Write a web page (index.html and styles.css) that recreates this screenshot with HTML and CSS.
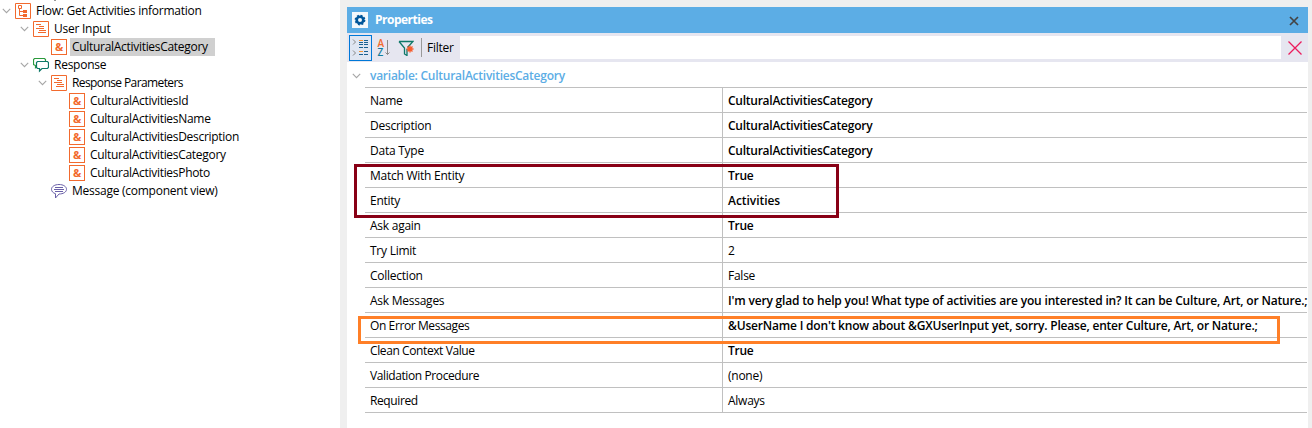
FILE: index.html
```
<!DOCTYPE html>
<html lang="en">
<head>
<meta charset="utf-8">
<title>Properties</title>
<link rel="stylesheet" href="styles.css">
</head>
<body>
<svg class="defs" width="0" height="0">
  <symbol id="chev" viewBox="0 0 9 6"><path d="M.8 .8 4.5 4.6 8.2 .8" fill="none" stroke="#a6a6a6" stroke-width="1.1"/></symbol>
  <symbol id="amp" viewBox="0 0 16 16"><rect x=".5" y=".5" width="15" height="15" fill="#fff" stroke="#f26a2e"/><text class="amp" x="8" y="12" text-anchor="middle">&amp;</text></symbol>
  <symbol id="list" viewBox="0 0 16 16"><path d="M.5.5h15v15H.5z" fill="#fff" stroke="#f26a2e"/><path d="M3 3.500h5M6 5.500h5M3 7.500h8M6 9.500h7M5 11.500h8" fill="none" stroke="#f26a2e"/></symbol>
  <symbol id="flow" viewBox="0 0 16 16"><path d="M.5.5h15v15H.5zM3.500 2.500h3v3h-3zM4.500 6v6.500h4M4.500 8.500h4" fill="none" stroke="#f26a2e"/><path d="M8 7h4v3H8zM8 11h4v3H8z" fill="#f26a2e"/></symbol>
  <symbol id="chat" viewBox="0 0 16 16"><path d="M3.500 9.500 2.500 10.500v-2L.5 7.500v-5l1-1h10l1 1v2" fill="none" stroke="#2a9a3c" stroke-width="1.200"/><path d="M4.500 4.500h10l1 1v5l-1 1H9L6.500 14v-2.500h-2l-1-1v-5z" fill="#fff" stroke="#0e7868" stroke-width="1.200"/></symbol>
  <symbol id="bubble" viewBox="0 0 16 16"><path d="M8 1.500c4.200 0 7.500 2 7.500 4.800S12.200 11 8 11L4.500 15v-4.300C2 10 .5 8.300 .5 6.300.5 3.500 3.800 1.500 8 1.500z" fill="#fff" stroke="#6a60a8"/><path d="M4 4.500h8M3 6.500h10M4 8.500h8" stroke="#6a60a8"/></symbol>
</svg>
<div class="app">
  <div class="tree">
    <div class="node l0"><svg class="chev"><use href="#chev"/></svg><svg class="icon"><use href="#flow"/></svg><span class="t">Flow: Get Activities information</span></div>
    <div class="node l1"><svg class="chev"><use href="#chev"/></svg><svg class="icon"><use href="#list"/></svg><span class="t">User Input</span></div>
    <div class="node l2 leaf"><svg class="icon"><use href="#amp"/></svg><span class="t selected">CulturalActivitiesCategory</span></div>
    <div class="node l1"><svg class="chev"><use href="#chev"/></svg><svg class="icon"><use href="#chat"/></svg><span class="t">Response</span></div>
    <div class="node l2"><svg class="chev"><use href="#chev"/></svg><svg class="icon"><use href="#list"/></svg><span class="t wide">Response Parameters</span></div>
    <div class="node l3 leaf"><svg class="icon"><use href="#amp"/></svg><span class="t">CulturalActivitiesId</span></div>
    <div class="node l3 leaf"><svg class="icon"><use href="#amp"/></svg><span class="t">CulturalActivitiesName</span></div>
    <div class="node l3 leaf"><svg class="icon"><use href="#amp"/></svg><span class="t">CulturalActivitiesDescription</span></div>
    <div class="node l3 leaf"><svg class="icon"><use href="#amp"/></svg><span class="t">CulturalActivitiesCategory</span></div>
    <div class="node l3 leaf"><svg class="icon"><use href="#amp"/></svg><span class="t">CulturalActivitiesPhoto</span></div>
    <div class="node l2 leaf"><svg class="icon"><use href="#bubble"/></svg><span class="t">Message (component view)</span></div>
  </div>
  <div class="panel">
    <div class="titlebar">
      <svg class="gear" viewBox="0 0 16 16"><rect width="16" height="16" fill="#f4f8fb"/><circle cx="8" cy="8" r="3.300" fill="none" stroke="#00569a" stroke-width="2.600"/><circle cx="8" cy="8" r="4.600" fill="none" stroke="#00569a" stroke-width="1.600" stroke-dasharray="1.900 1.713"/></svg>
      <span class="title">Properties</span>
      <svg class="close" viewBox="0 0 10 10"><path d="M1 1l8 8M9 1 1 9" stroke="#444" stroke-width="1.700"/></svg>
    </div>
    <div class="toolbar">
      <div class="toggle"><svg viewBox="0 0 21 24"><path d="M3 3.500 5.500 6 3 8.500M3 14.500 5.500 17 3 19.500" fill="none" stroke="#888"/><path d="M9 4.500h4M9 15.500h4" stroke="#f39434"/><path d="M14 4.500h4M9 6.500h4M14 6.500h4M9 8.500h4M14 8.500h4M9 11.500h4M14 11.500h4M14 15.500h4M9 18.500h4M14 18.500h4" stroke="#1c6090" stroke-width="1.100"/></svg></div>
      <svg class="sort" viewBox="0 0 14 18"><text x="1.500" y="8" fill="#f26a2e">A</text><text x="1.500" y="17" fill="#127d9c">Z</text><path d="M11.500 1v14.500M9.500 13.500l2 2 2-2" fill="none" stroke="#888"/></svg>
      <svg class="funnel" viewBox="0 0 16 16"><path d="M1 1.500h14L9.500 7.500M1 1.500 6.500 8v6l2.500 1.500V9" fill="none" stroke="#0e7868" stroke-width="1.300"/><path d="M12 5.500v7M8.500 9h7M9.500 6.500l5 5M14.500 6.500l-5 5" stroke="#f75c2c" stroke-width="1.400"/></svg>
      <span class="sep"></span>
      <span class="filter">Filter</span>
      <div class="input"></div>
      <svg class="clear" viewBox="0 0 14 14"><path d="M.5.5l13 13M13.500.5l-13 13" stroke="#ec1c5c" stroke-width="1.300"/></svg>
    </div>
    <div class="group"><svg class="chev"><use href="#chev"/></svg><span class="gtitle">variable: CulturalActivitiesCategory</span></div>
    <div class="grid">
      <div class="row"><span>Name</span><b>CulturalActivitiesCategory</b></div>
      <div class="row"><span>Description</span><b>CulturalActivitiesCategory</b></div>
      <div class="row"><span>Data Type</span><b>CulturalActivitiesCategory</b></div>
      <div class="row"><span>Match With Entity</span><b>True</b></div>
      <div class="row"><span>Entity</span><b class="wide">Activities</b></div>
      <div class="row"><span>Ask again</span><b>True</b></div>
      <div class="row"><span>Try Limit</span><i>2</i></div>
      <div class="row"><span>Collection</span><i>False</i></div>
      <div class="row"><span>Ask Messages</span><b class="ask">I'm very glad to help you! What type of activities are you interested in? It can be Culture, Art, or Nature.;</b></div>
      <div class="row"><span class="tight">On Error Messages</span><b class="err">&amp;UserName I don't know about &amp;GXUserInput yet, sorry. Please, enter Culture, Art, or Nature.;</b></div>
      <div class="row"><span class="tight">Clean Context Value</span><b>True</b></div>
      <div class="row"><span class="tight">Validation Procedure</span><i>(none)</i></div>
      <div class="row"><span class="tight">Required</span><i>Always</i></div>
      <div class="mark entity"></div>
      <div class="mark error"></div>
    </div>
  </div>
</div>
</body>
</html>
```
FILE: styles.css
```
* { box-sizing: border-box; }
body { margin: 0; font: 12px "Open Sans", "Noto Sans", sans-serif; letter-spacing: -0.25px; color: #000; background: #efefef; overflow: hidden; white-space: nowrap; }
.defs { position: absolute; }
svg { display: block; flex: none; }
.app { display: flex; width: 1312px; height: 428px; }
.tree { width: 340px; padding-top: 2px; background: linear-gradient(#999, #999) 54px 0 / 2px 1px no-repeat #fff; }
.node { display: flex; align-items: center; height: 18px; }
.l0 { padding-left: 2px; }
.l1 { padding-left: 20px; }
.l2 { padding-left: 38px; }
.l3 { padding-left: 56px; letter-spacing: -0.3px; }
.leaf .icon { margin-left: 13px; }
.chev { width: 9px; height: 6px; }
.icon { width: 16px; height: 16px; margin-left: 4px; }
.amp { font: 700 11px "Open Sans", sans-serif; fill: #f26a2e; letter-spacing: 0; }
.t { height: 18px; line-height: 18px; margin-left: 3px; padding: 0 2px; }
.selected { background: #d0d0d0; padding-right: 7px; letter-spacing: -0.3px; }
.panel { width: 961px; margin: 7px 4px 0 7px; background: #fff; }
.titlebar { display: flex; align-items: center; height: 26px; padding: 0 9px 0 5px; background: #5cade5; }
.gear { width: 16px; height: 16px; }
.title { flex: 1; margin-left: 7px; color: #fff; font-weight: 700; letter-spacing: -0.5px; line-height: 26px; height: 26px; }
.close { width: 10px; height: 10px; margin-top: 2px; }
.toolbar { display: flex; align-items: center; height: 29px; padding-left: 2px; background: #e6e6f0; }
.toggle { width: 23px; height: 26px; border: 1px solid #0078d7; background: #e0e6f2; }
.toggle svg { width: 21px; height: 24px; }
.sort { width: 14px; height: 18px; margin-left: 4px; font: 600 10px "Open Sans", sans-serif; letter-spacing: 0; overflow: visible; }
.funnel { width: 16px; height: 16px; margin-left: 8px; }
.sep { width: 1px; height: 19px; margin-left: 7px; background: #999; }
.filter { margin-left: 5px; width: 33px; line-height: 28px; }
.input { width: 821px; height: 23px; background: #fff; }
.clear { width: 14px; height: 14px; margin-left: 7px; }
.group { display: flex; align-items: center; height: 25px; padding-top: 3px; padding-left: 5px; }
.gtitle { margin-left: 9px; color: #5cade5; font-weight: 600; line-height: 20px; }
.grid { position: relative; margin: 0 1px 0 18px; border-top: 1px solid #c0c0c0; }
.row { display: grid; grid-template-columns: 357px 1fr; height: 25px; border-bottom: 1px solid #c0c0c0; line-height: 26px; }
.row span { padding-left: 5px; }
.row b, .row i { height: 24px; padding-left: 5px; border-left: 1px solid #c0c0c0; font-style: normal; }
.row b { font-weight: 600; }
.row .ask { letter-spacing: -0.175px; }
.row .err { letter-spacing: -0.19px; }
.row .tight { letter-spacing: -0.4px; }
.row .wide { letter-spacing: -0.05px; }
.t.wide { letter-spacing: -0.6px; }
.mark { position: absolute; }
.entity { left: -11px; top: 76px; width: 485px; height: 54px; border: 3px solid #880015; }
.error { left: -7px; top: 228px; width: 922px; height: 28px; border: 3px solid #ff7f27; }
```
